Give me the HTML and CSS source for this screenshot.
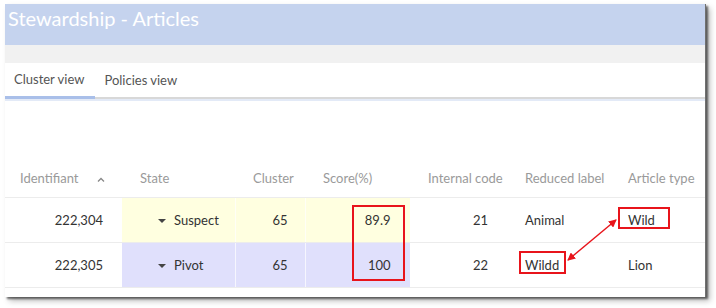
FILE: index.html
```html
<!DOCTYPE html>
<html lang="en">
<head>
    <title>Stewardship - Articles</title>
    <link rel="stylesheet" href="styles.css">
</head>
<body>
    <div class="window">
        <div class="title-bar">Stewardship - Articles</div>
        <div class="band"></div>
        <div class="tabs">
            <div class="tab active">Cluster view</div>
            <div class="tab">Policies view</div>
        </div>
        <div class="spacer"></div>
        <table class="grid">
            <colgroup>
                <col style="width:117px">
                <col style="width:113px">
                <col style="width:70px">
                <col style="width:105px">
                <col style="width:97px">
                <col style="width:103px">
                <col style="width:96px">
            </colgroup>
            <thead>
                <tr>
                    <th class="sortable">Identifiant
                        <svg class="sort-icon" width="8" height="5" viewBox="0 0 8 5"><path d="M1 4.5 L4 1.5 L7 4.5" fill="none" stroke="#888" stroke-width="1.3"/></svg>
                    </th>
                    <th>State</th>
                    <th>Cluster</th>
                    <th>Score(%)</th>
                    <th>Internal code</th>
                    <th>Reduced label</th>
                    <th>Article type</th>
                </tr>
            </thead>
            <tbody>
                <tr class="suspect">
                    <td class="num">222,304</td>
                    <td class="state hl"><span class="caret"></span>Suspect</td>
                    <td class="center hl">65</td>
                    <td class="num hl">89.9</td>
                    <td class="num">21</td>
                    <td>Animal</td>
                    <td>Wild</td>
                </tr>
                <tr class="pivot">
                    <td class="num">222,305</td>
                    <td class="state hl"><span class="caret"></span>Pivot</td>
                    <td class="center hl">65</td>
                    <td class="num hl">100</td>
                    <td class="num">22</td>
                    <td>Wildd</td>
                    <td>Lion</td>
                </tr>
            </tbody>
        </table>
    </div>

    <!-- red annotation marks drawn over the screenshot -->
    <svg class="marks" width="716" height="308" viewBox="0 0 716 308">
        <defs>
            <marker id="head" markerWidth="8" markerHeight="8" refX="7" refY="4" orient="auto-start-reverse" markerUnits="userSpaceOnUse">
                <path d="M0 0 L8 4 L0 8 Z" fill="#e8141b"/>
            </marker>
        </defs>
        <rect x="353" y="206" width="51" height="74" fill="none" stroke="#e8141b" stroke-width="2"/>
        <rect x="619" y="208" width="50" height="20" fill="none" stroke="#e8141b" stroke-width="2"/>
        <rect x="520" y="252" width="45" height="21" fill="none" stroke="#e8141b" stroke-width="2"/>
        <line x1="568" y1="260" x2="616" y2="220" stroke="#e8141b" stroke-width="1.4" marker-start="url(#head)" marker-end="url(#head)"/>
    </svg>
</body>
</html>
```

FILE: styles.css
```css
body {
    margin: 0;
    background: #ffffff;
    font-family: Lato, "Open Sans", sans-serif;
    position: relative;
    width: 716px;
    height: 308px;
    overflow: hidden;
}
.window {
    margin: 4px 0 0 5px;
    width: 701px;
    height: 293px;
    background: #ffffff;
    box-shadow: 2px 2px 2px rgba(0, 0, 0, 0.55), 4px 4px 6px rgba(0, 0, 0, 0.25);
    border-right: 1px solid #707070;
    box-sizing: border-box;
    overflow: hidden;
}
.title-bar {
    height: 41px;
    background: #c5d3ee;
    color: #ffffff;
    font-size: 20px;
    padding: 2px 0 0 3px;
    box-sizing: border-box;
    line-height: 24px;
}
.band {
    height: 18px;
    background: #f1f1f1;
}
.tabs {
    display: flex;
    height: 34px;
    border-bottom: 2px solid #d8d8d8;
    box-shadow: 0 2px 0 #e3eaf7;
}
.tab {
    padding: 0 11px 0 9px;
    line-height: 34px;
    font-size: 13px;
    color: #555555;
}
.tab.active {
    border-bottom: 3px solid #a9bfe9;
    margin-bottom: -2px;
    line-height: 33px;
}
.spacer {
    height: 61px;
}
.grid {
    border-collapse: collapse;
    table-layout: fixed;
    width: 701px;
    font-size: 13px;
}
.grid th {
    height: 36px;
    font-weight: normal;
    color: #9a9a9a;
    text-align: left;
    padding: 0 0 1px 18px;
    border-bottom: 1px solid #ececec;
    white-space: nowrap;
}
.grid th.sortable {
    padding-left: 15px;
}
.sort-icon {
    margin-left: 15px;
    vertical-align: middle;
}
.grid td {
    height: 44px;
    color: #333333;
    padding: 0 0 0 18px;
    border-bottom: 1px solid #ececec;
    white-space: nowrap;
}
.grid td.num {
    text-align: right;
    padding: 0 19px 0 0;
}
.grid td.center {
    text-align: center;
    padding: 0 0 0 20px;
}
.grid td.state {
    padding-left: 36px;
}
.grid td.hl {
    border-right: 1px solid rgba(255, 255, 255, 0.7);
}
.suspect .hl {
    background: #ffffe0;
}
.pivot .hl {
    background: #e0e0fc;
}
.caret {
    display: inline-block;
    width: 0;
    height: 0;
    border-left: 4px solid transparent;
    border-right: 4px solid transparent;
    border-top: 4px solid #444444;
    margin-right: 8px;
    vertical-align: middle;
    position: relative;
    top: -1px;
}
.marks {
    position: absolute;
    left: 0;
    top: 0;
    pointer-events: none;
}
```
